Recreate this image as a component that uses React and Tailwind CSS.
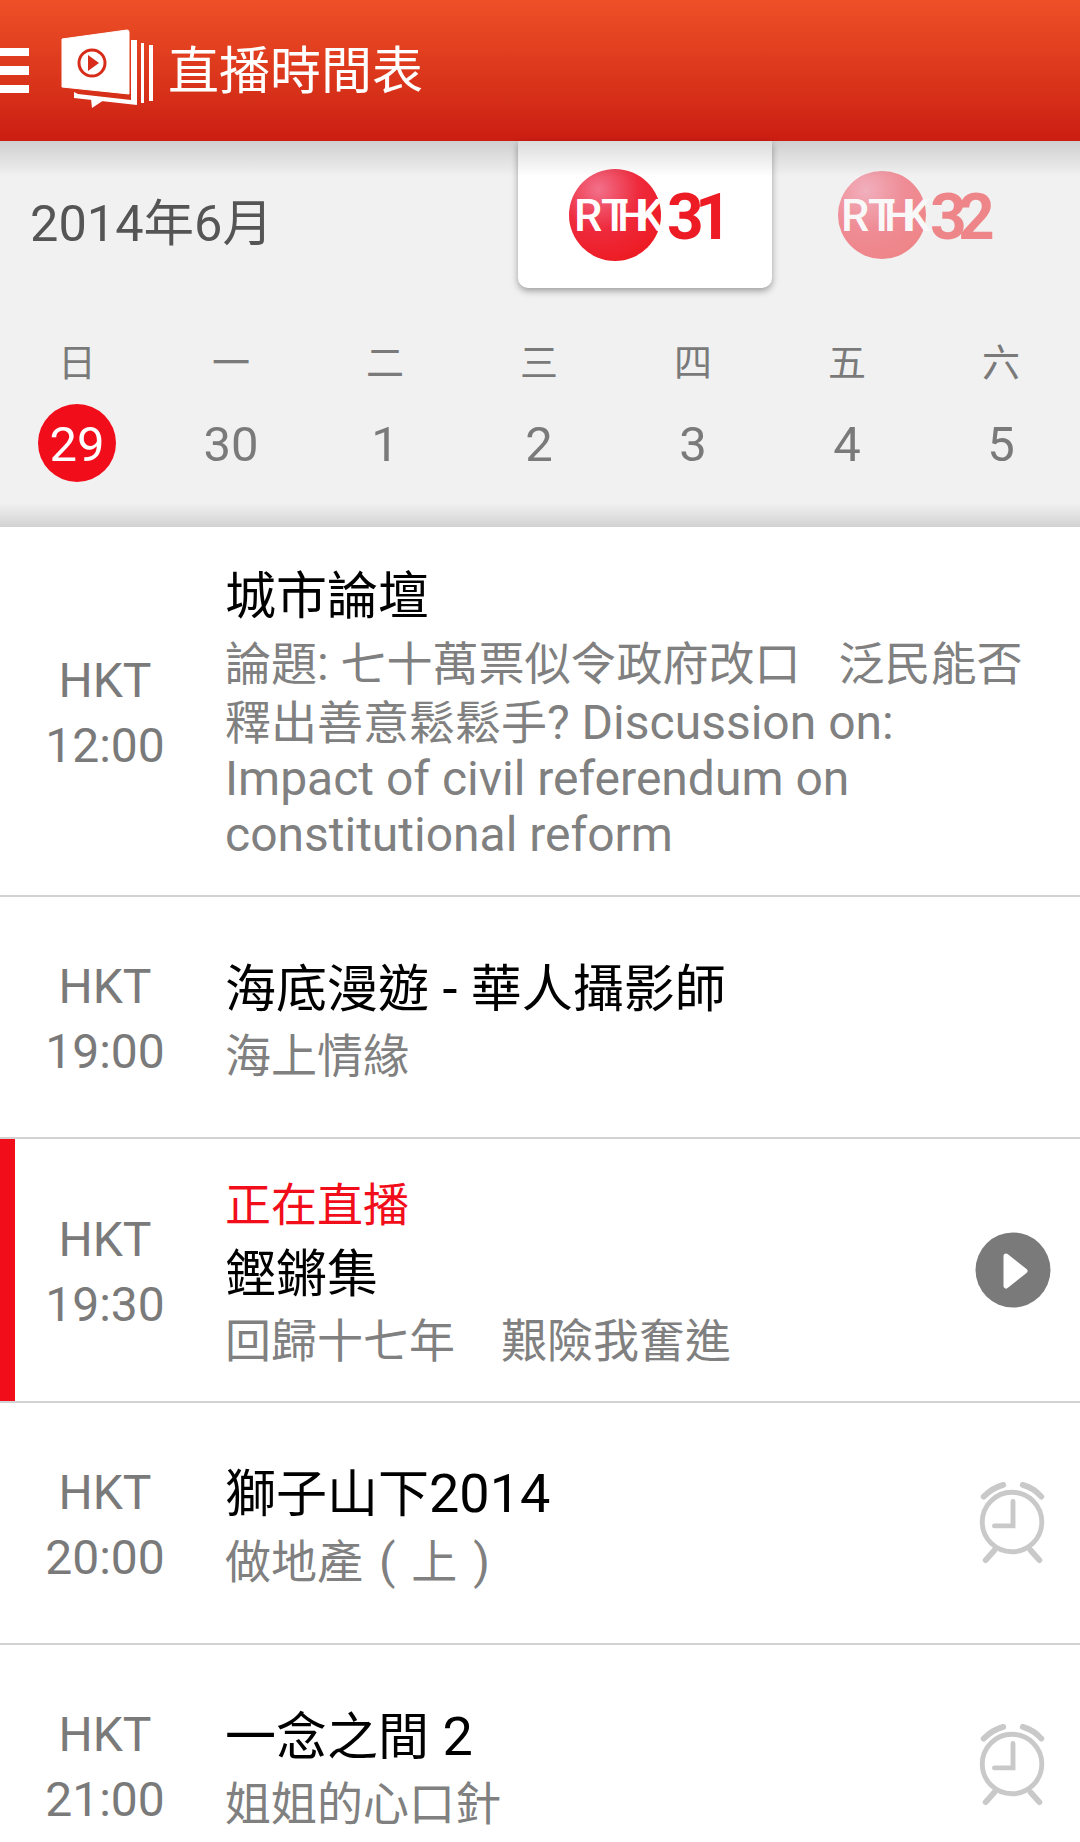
const days = [
  { w: "日", d: "29", today: true },
  { w: "一", d: "30" },
  { w: "二", d: "1" },
  { w: "三", d: "2" },
  { w: "四", d: "3" },
  { w: "五", d: "4" },
  { w: "六", d: "5" },
];

function Latin({ children }) {
  return <span className="text-[48px]">{children}</span>;
}

function AppLogo() {
  return (
    <svg width="106" height="84" viewBox="0 0 100 84" className="shrink-0">
      <path d="M1 10 L66 1 Q68 1 68 3 L68 65 L1 58 Z" fill="#fff" stroke="#fff" strokeLinejoin="round" />
      <circle cx="31" cy="34" r="13" fill="none" stroke="#d62c19" strokeWidth="3" />
      <path d="M27 26 L38 34 L27 42 Z" fill="#d62c19" />
      <path d="M70 11 L76 11 L76 76 L13 69 L13 63 L17 65 L70 71 Z" fill="#fff" />
      <path d="M80 14 L83 14 L83 74 L80 74 Z M88 16 L92 16 L92 72 L88 72 Z" fill="#fff" />
      <path d="M30 70 L43 71 L31 79 Z" fill="#fff" />
    </svg>
  );
}

function RthkLogo({ num, id, faded, xs }) {
  return (
    <svg width="164" height="94" viewBox="0 0 164 94" className={faded ? "ml-[4px] opacity-50" : "ml-[12px]"}>
      <defs>
        <radialGradient id={id} cx="0.32" cy="0.22" r="0.8">
          <stop offset="0" stopColor="#f2708a" />
          <stop offset="0.55" stopColor="#ee2a3c" />
          <stop offset="1" stopColor="#ed1c24" />
        </radialGradient>
      </defs>
      <circle cx="46" cy="47" r={faded ? 44 : 46} fill={`url(#${id})`} />
      <text x="5 32 48 66" y="63" fontFamily="Roboto" fontWeight="500" fontSize="45" fill="#fff">RTHK</text>
      <text x={xs} y="71" fontFamily="Roboto" fontWeight="700" fontSize="64" fill="#ed1c24">{num}</text>
    </svg>
  );
}

function PlayIcon() {
  return (
    <svg width="76" height="76" viewBox="0 0 76 76">
      <circle cx="38" cy="38" r="37.5" fill="#7a7a7a" />
      <path d="M31 24 L50 39 L31 54 Z" fill="#fff" stroke="#fff" strokeWidth="5" strokeLinejoin="round" />
    </svg>
  );
}

function AlarmIcon() {
  return (
    <svg width="68" height="82" viewBox="0 0 68 84" fill="none" stroke="#c9c9c9" strokeWidth="5" strokeLinecap="round">
      <circle cx="33" cy="41" r="30.5" />
      <path d="M34 20 V45 H15" />
      <path d="M4 15 Q13 6 24 3" strokeWidth="6" />
      <path d="M44 3 Q55 6 63 15" strokeWidth="6" />
      <path d="M15 70 L6 80" strokeWidth="6" />
      <path d="M52 70 L61 80" strokeWidth="6" />
    </svg>
  );
}

function Program({ time, label, title, sub, icon, height, active }) {
  return (
    <div className={`flex border-b-2 border-[#d2d2d2] ${height}`}>
      {active && <div className="w-[15px] shrink-0 bg-[#f20d1b]" />}
      <div className={`${active ? "w-[180px]" : "w-[210px]"} shrink-0 self-center pt-[4px] text-center text-[48px] leading-[65px] text-[#7a7a7a]`}>
        <div>HKT</div>
        <div>{time}</div>
      </div>
      <div className={`${active ? "ml-[30px]" : "ml-[15px]"} flex-1 self-center pt-[4px]`}>
        {label && <div className="text-[46px] leading-[68px] -mt-[3px] mb-[2px] -translate-y-[2px] text-[#f20d1b]">{label}</div>}
        <div className={`text-[51px] leading-[68px] text-black ${active ? "-mt-[2px]" : ""}`}>{title}</div>
        <div className="mt-[5px] text-[46px] leading-[55px] text-[#808080]">{sub}</div>
      </div>
      {icon && <div className="w-[106px] mr-[14px] shrink-0 self-center flex justify-center">{icon}</div>}
    </div>
  );
}

export default function App() {
  return (
    <div className="relative w-[1080px] h-[1842px] overflow-hidden bg-white font-['Roboto','Noto_Sans_CJK_TC',sans-serif]">
      <header className="h-[141px] flex items-center bg-gradient-to-b from-[#ee4f27] to-[#cb1c12]">
        <div className="w-[29px] flex flex-col gap-[10px]">
          <div className="h-[8px] bg-white" />
          <div className="h-[9px] bg-white" />
          <div className="h-[8px] bg-white" />
        </div>
        <div className="ml-[29px] mt-[1px]"><AppLogo /></div>
        <div className="ml-[4px] mt-[1px] text-[51px] leading-none text-white">直播時間表</div>
      </header>

      <div className="relative h-[386px] bg-[#f1f1f1]">
        <div className="flex h-[147px]">
          <div className="w-[518px] shrink-0 pl-[30px] pt-[59px] text-[50.5px] leading-[48px] text-[#555]">2014年6月</div>
          <div className="w-[254px] shrink-0 flex items-center justify-center bg-white rounded-b-[10px] shadow-[0_3px_7px_rgba(0,0,0,0.35)]">
            <RthkLogo num="31" id="logo31" xs="98 126" />
          </div>
          <div className="w-[288px] shrink-0 flex items-center justify-center">
            <RthkLogo num="32" id="logo32" xs="94 122" faded />
          </div>
        </div>
        <div className="grid grid-cols-7 mt-[48px] pr-[2px] text-center text-[#7a7a7a]">
          {days.map((day) => (
            <div key={day.w} className="flex flex-col items-center">
              <div className="text-[38px] leading-[54px]">{day.w}</div>
              <div className={`mt-[14px] pt-[3px] w-[78px] h-[78px] rounded-full flex items-center justify-center text-[49px] ${day.today ? "bg-[#f20d1b] text-white" : ""}`}>{day.d}</div>
            </div>
          ))}
        </div>
        <div className="absolute left-0 right-0 bottom-0 h-[24px] bg-gradient-to-b from-transparent to-[#d2d2d2]" />
        <div className="absolute left-0 right-0 top-0 h-[36px] bg-gradient-to-b from-[rgba(0,0,0,0.14)] to-transparent" />
      </div>

      <Program
        height="h-[370px]"
        time="12:00"
        title="城市論壇"
        sub={
          <>
            論題<Latin>: </Latin>七十萬票似令政府改口<span className="text-[38px]">　</span>泛民能否<br />
            釋出善意鬆鬆手<Latin>? Discussion on:</Latin><br />
            <Latin>Impact of civil referendum on</Latin><br />
            <Latin>constitutional reform</Latin>
          </>
        }
      />
      <Program height="h-[242px]" time="19:00" title={<>海底漫遊<span className="text-[54px]"> - </span>華人攝影師</>} sub="海上情緣" />
      <Program height="h-[264px]" time="19:30" label="正在直播" title="鏗鏘集" sub="回歸十七年　艱險我奮進" icon={<PlayIcon />} active />
      <Program
        height="h-[242px]"
        time="20:00"
        title={<>獅子山下<span className="text-[54px]">2014</span></>}
        sub={<span className="[word-spacing:4px]">做地產<Latin> ( </Latin>上<Latin> )</Latin></span>}
        icon={<AlarmIcon />}
      />
      <Program height="h-[242px]" time="21:00" title={<>一念之間<span className="text-[54px]"> 2</span></>} sub="姐姐的心口針" icon={<AlarmIcon />} />
    </div>
  );
}
